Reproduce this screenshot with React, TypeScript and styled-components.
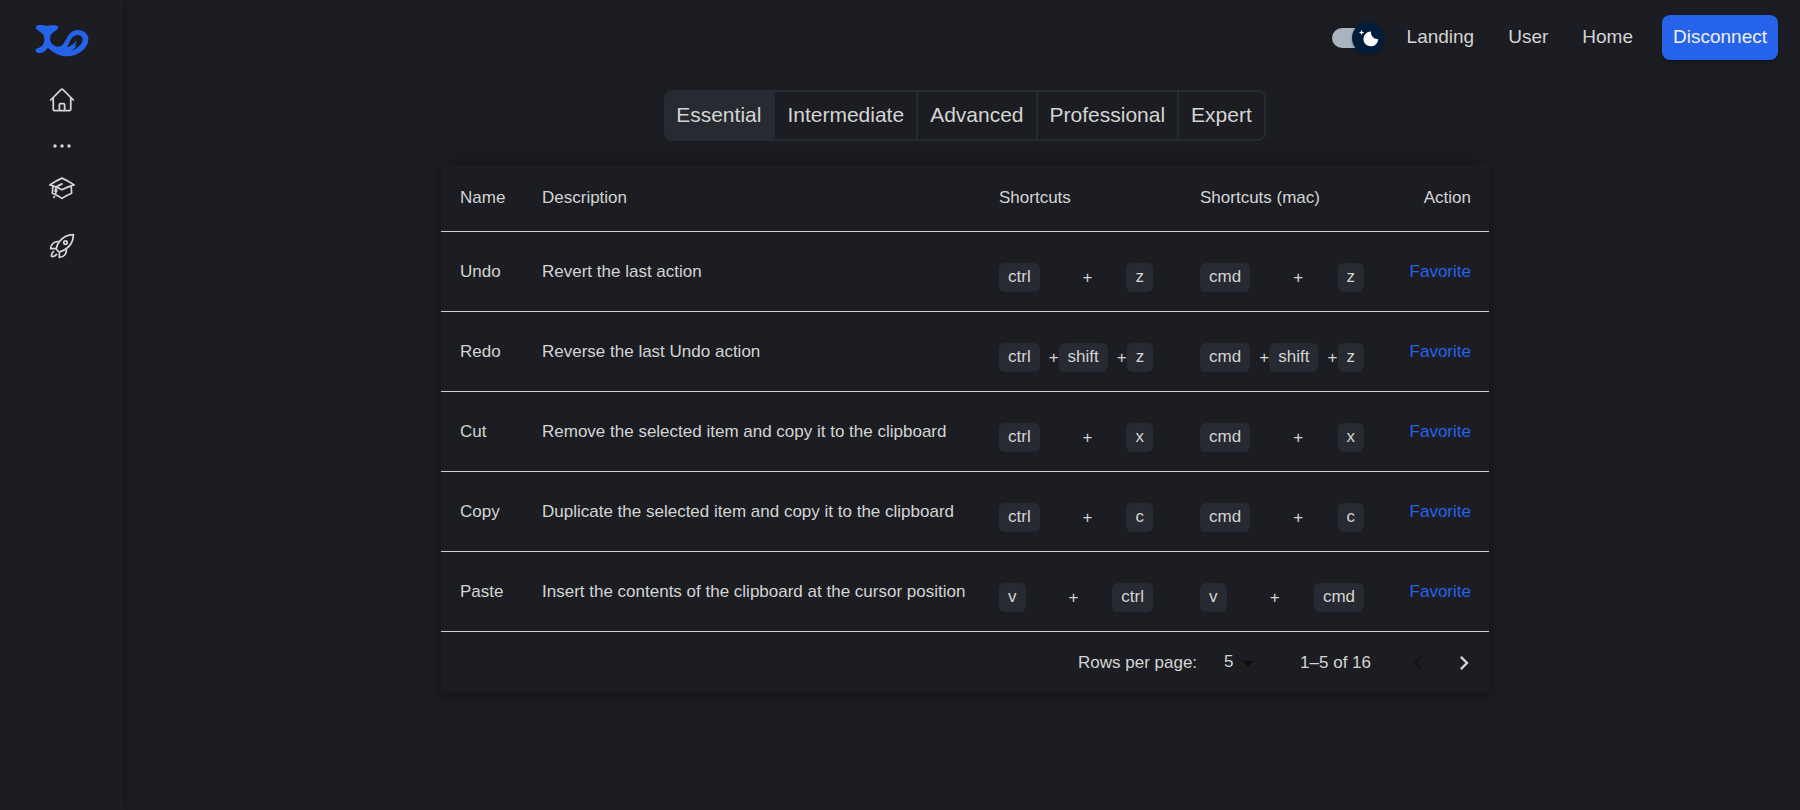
import React from 'react';
import styled, { createGlobalStyle } from 'styled-components';
import {
  HiOutlineHome,
  HiOutlineEllipsisHorizontal,
  HiOutlineAcademicCap,
  HiOutlineRocketLaunch,
} from 'react-icons/hi2';

const color = {
  page: '#1c1d22',
  raised: '#272a31',
  text: '#d4d4d4',
  line: '#d0d0d4',
  accent: '#2563eb',
};

const GlobalStyle = createGlobalStyle`
  *, *::before, *::after { box-sizing: border-box; }
  body {
    margin: 0;
    background: ${color.page};
    color: ${color.text};
    font-family: "Liberation Sans", Arial, sans-serif;
    font-size: 17px;
  }
  button, select { font: inherit; color: inherit; }
  a { color: inherit; text-decoration: none; }
`;

const Shell = styled.div`
  display: flex;
  min-height: 100vh;
`;

const Sidebar = styled.nav`
  flex: 0 0 123px;
  display: flex;
  flex-direction: column;
  align-items: center;
  padding-top: 24px;
  box-shadow: 0 0 14px rgba(0, 0, 0, 0.3);
`;

const LogoLink = styled.a`
  display: block;
  height: 34px;
  margin-bottom: 28px;
`;

const SideLink = styled.a<{ $gap: number }>`
  display: flex;
  margin-bottom: ${(p) => p.$gap}px;
`;

const Main = styled.main`
  flex: 1;
  min-width: 0;
  display: flex;
  flex-direction: column;
  align-items: center;
  padding-left: 7px;
`;

const Header = styled.header`
  align-self: stretch;
  display: flex;
  justify-content: flex-end;
  align-items: center;
  height: 75px;
  padding-right: 22px;
  margin-bottom: 15px;
`;

const NavLink = styled.a`
  padding: 0 17px 2px;
  font-size: 19px;
  line-height: 28px;
`;

const DisconnectButton = styled.button`
  height: 45px;
  margin-left: 12px;
  padding: 0 11px 2px;
  border: 0;
  border-radius: 8px;
  background: ${color.accent};
  color: #f0f0f0;
  font-size: 19px;
  box-shadow: 0 2px 4px rgba(0, 0, 0, 0.35);
`;

const SwitchLabel = styled.label`
  position: relative;
  display: block;
  width: 52px;
  height: 32px;
  margin-right: 6px;
`;

const SwitchInput = styled.input`
  position: absolute;
  inset: 0;
  width: 100%;
  height: 100%;
  margin: 0;
  opacity: 0;
`;

const SwitchTrack = styled.span`
  display: block;
  width: 46px;
  height: 20px;
  margin-top: 6px;
  border-radius: 10px;
  background: #aab4be;
`;

const SwitchThumb = styled.span`
  position: absolute;
  top: 0;
  right: 0;
  display: flex;
  align-items: center;
  justify-content: center;
  width: 32px;
  height: 32px;
  border-radius: 50%;
  background: #001e3c;
  box-shadow: 0 1px 3px rgba(0, 0, 0, 0.3);
`;

const Tabs = styled.div`
  display: flex;
  border: 2px solid ${color.raised};
  border-radius: 8px;
  margin-bottom: 24px;
  overflow: hidden;
`;

const Tab = styled.button<{ $active: boolean }>`
  height: 47px;
  padding: 0 12px 2px;
  border: 0;
  border-right: 2px solid ${color.raised};
  background: ${(p) => (p.$active ? color.raised : 'transparent')};
  font-size: 21px;
  &:first-child { padding-left: 10px; }
  &:last-child { border-right: 0; }
`;

const Card = styled.section`
  box-shadow: 0 0 22px rgba(0, 0, 0, 0.25), 0 2px 4px rgba(0, 0, 0, 0.2);
`;

const Table = styled.table`
  table-layout: fixed;
  width: 1048px;
  border-collapse: collapse;
`;

const Column = styled.col<{ $width: number }>`
  width: ${(p) => p.$width}px;
`;

const HeadCell = styled.th<{ $align?: string }>`
  padding: 19px 12px 19px 19px;
  border-bottom: 1px solid ${color.line};
  font-weight: 400;
  line-height: 28px;
  text-align: ${(p) => p.$align ?? 'left'};
  white-space: nowrap;
  &:last-child { padding: 19px 18px 19px 12px; }
`;

const BodyCell = styled.td<{ $align?: string }>`
  padding: 19px 12px 19px 19px;
  border-bottom: 1px solid ${color.line};
  line-height: 24px;
  text-align: ${(p) => p.$align ?? 'left'};
  white-space: nowrap;
  &:last-child { padding: 19px 18px 19px 12px; }
`;

const Combo = styled.div`
  display: flex;
  justify-content: space-between;
  align-items: center;
  padding: 12px 7px 0 0;
`;

const Key = styled.kbd`
  display: block;
  height: 29px;
  margin-right: 9px;
  padding: 0 9px;
  border-radius: 6px;
  background: ${color.raised};
  font-family: inherit;
  font-size: 17px;
  line-height: 28px;
`;

const FavoriteLink = styled.a`
  color: ${color.accent};
`;

const Pagination = styled.div`
  display: flex;
  justify-content: flex-end;
  align-items: center;
  height: 61px;
  padding-right: 2px;
`;

const PageSize = styled.label`
  display: flex;
  align-items: center;
  margin-right: 38px;
`;

const SelectWrap = styled.span`
  position: relative;
  margin-left: 7px;
`;

const PageSizeSelect = styled.select`
  appearance: none;
  display: block;
  height: 28px;
  padding: 0 28px 2px 20px;
  border: 0;
  background: transparent;
`;

const SelectArrow = styled.svg`
  position: absolute;
  top: 0;
  right: 0;
  pointer-events: none;
  fill: rgba(0, 0, 0, 0.54);
`;

const Range = styled.span`
  margin-right: 24px;
`;

const PagerButton = styled.button`
  display: flex;
  padding: 9px;
  border: 0;
  background: transparent;
  &:disabled { color: rgba(0, 0, 0, 0.26); }
  svg { fill: currentColor; }
`;

function Logo() {
  return (
    <svg width="54" height="34" viewBox="0 0 162 102" aria-hidden="true">
      <path
        fill={color.accent}
        fillRule="evenodd"
        d="M10 3C18 2 26 5 36 5C47 5 54 3 61 4C71 5 73 13 65 18C53 25 45 32 45 43C45 55 54 68 69 68C84 68 88 54 96 41C104 27 114 18 128 18C146 18 160 29 160 46C160 74 128 97 96 97C75 97 54 87 39 71C34 74 33 80 26 84C17 89 5 89 2 82C0 76 6 73 12 71C23 67 28 59 28 45C28 32 18 25 8 18C1 14 1 5 10 3Z
        M96 68C104 62 106 33 128 33C144 34 147 48 138 60C131 69 120 77 105 82Z"
      />
      <path
        fill={color.accent}
        d="M92 70C106 68 114 62 124 50C125 58 122 63 118 67L126 64C120 72 113 78 100 86Z"
      />
    </svg>
  );
}

function ThemeSwitch() {
  return (
    <SwitchLabel>
      <SwitchInput type="checkbox" role="switch" aria-label="Dark mode" defaultChecked />
      <SwitchTrack />
      <SwitchThumb>
        <svg width="22" height="22" viewBox="0 0 20 20" aria-hidden="true">
          <path
            fill="#fff"
            d="M4.2 2.5l-.7 1.8-1.8.7 1.8.7.7 1.8.6-1.8L6.7 5l-1.9-.7-.6-1.8zm15 8.3a6.7 6.7 0 11-6.6-6.6 5.8 5.8 0 006.6 6.6z"
          />
        </svg>
      </SwitchThumb>
    </SwitchLabel>
  );
}

function Shortcut({ keys }: { keys: string[] }) {
  return (
    <Combo>
      {keys.map((key, i) => (
        <React.Fragment key={key}>
          {i > 0 && <span>+</span>}
          <Key>{key}</Key>
        </React.Fragment>
      ))}
    </Combo>
  );
}

const levels = ['Essential', 'Intermediate', 'Advanced', 'Professional', 'Expert'];

const columnWidths = [82, 457, 201, 211, 97];

const rows = [
  { name: 'Undo', description: 'Revert the last action', pc: ['ctrl', 'z'], mac: ['cmd', 'z'] },
  { name: 'Redo', description: 'Reverse the last Undo action', pc: ['ctrl', 'shift', 'z'], mac: ['cmd', 'shift', 'z'] },
  { name: 'Cut', description: 'Remove the selected item and copy it to the clipboard', pc: ['ctrl', 'x'], mac: ['cmd', 'x'] },
  { name: 'Copy', description: 'Duplicate the selected item and copy it to the clipboard', pc: ['ctrl', 'c'], mac: ['cmd', 'c'] },
  { name: 'Paste', description: 'Insert the contents of the clipboard at the cursor position', pc: ['v', 'ctrl'], mac: ['v', 'cmd'] },
];

export default function App() {
  const [level, setLevel] = React.useState('Essential');

  return (
    <>
      <GlobalStyle />
      <Shell>
        <Sidebar aria-label="Sections">
          <LogoLink href="#" aria-label="Start"><Logo /></LogoLink>
          <SideLink $gap={18} href="#home" aria-label="Home"><HiOutlineHome size={28} /></SideLink>
          <SideLink $gap={14} href="#more" aria-label="More"><HiOutlineEllipsisHorizontal size={28} /></SideLink>
          <SideLink $gap={30} href="#learn" aria-label="Learn"><HiOutlineAcademicCap size={28} /></SideLink>
          <SideLink $gap={0} href="#launch" aria-label="Launch"><HiOutlineRocketLaunch size={28} /></SideLink>
        </Sidebar>
        <Main>
          <Header>
            <ThemeSwitch />
            <NavLink href="#landing">Landing</NavLink>
            <NavLink href="#user">User</NavLink>
            <NavLink href="#home">Home</NavLink>
            <DisconnectButton type="button">Disconnect</DisconnectButton>
          </Header>
          <Tabs role="tablist">
            {levels.map((name) => (
              <Tab
                key={name}
                type="button"
                role="tab"
                aria-selected={name === level}
                $active={name === level}
                onClick={() => setLevel(name)}
              >
                {name}
              </Tab>
            ))}
          </Tabs>
          <Card>
            <Table>
              <colgroup>
                {columnWidths.map((width, i) => <Column key={i} $width={width} />)}
              </colgroup>
              <thead>
                <tr>
                  <HeadCell>Name</HeadCell>
                  <HeadCell>Description</HeadCell>
                  <HeadCell>Shortcuts</HeadCell>
                  <HeadCell>Shortcuts (mac)</HeadCell>
                  <HeadCell $align="right">Action</HeadCell>
                </tr>
              </thead>
              <tbody>
                {rows.map((row) => (
                  <tr key={row.name}>
                    <BodyCell>{row.name}</BodyCell>
                    <BodyCell>{row.description}</BodyCell>
                    <BodyCell><Shortcut keys={row.pc} /></BodyCell>
                    <BodyCell><Shortcut keys={row.mac} /></BodyCell>
                    <BodyCell $align="right"><FavoriteLink href="#favorite">Favorite</FavoriteLink></BodyCell>
                  </tr>
                ))}
              </tbody>
            </Table>
            <Pagination>
              <PageSize>
                Rows per page:
                <SelectWrap>
                  <PageSizeSelect defaultValue="5">
                    <option>5</option>
                  </PageSizeSelect>
                  <SelectArrow width="28" height="28" viewBox="0 0 24 24" aria-hidden="true">
                    <path d="M7 10l5 5 5-5z" />
                  </SelectArrow>
                </SelectWrap>
              </PageSize>
              <Range>1–5 of 16</Range>
              <PagerButton type="button" aria-label="Previous page" disabled>
                <svg width="28" height="28" viewBox="0 0 24 24"><path d="M15.41 16.59L10.83 12l4.58-4.59L14 6l-6 6 6 6z" /></svg>
              </PagerButton>
              <PagerButton type="button" aria-label="Next page">
                <svg width="28" height="28" viewBox="0 0 24 24"><path d="M8.59 16.59L13.17 12 8.59 7.41 10 6l6 6-6 6z" /></svg>
              </PagerButton>
            </Pagination>
          </Card>
        </Main>
      </Shell>
    </>
  );
}
